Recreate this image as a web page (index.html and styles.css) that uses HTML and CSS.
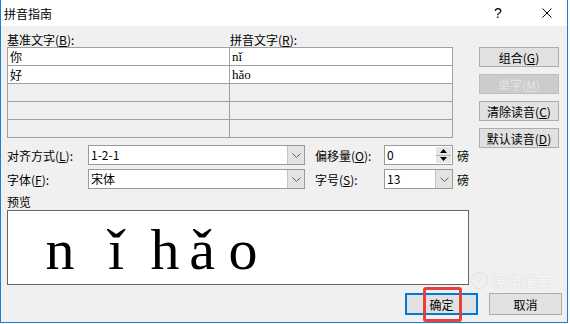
FILE: index.html
```html
<!DOCTYPE html>
<html lang="zh-CN">
<head>
  <meta charset="UTF-8" />
  <title>拼音指南</title>
  <link rel="stylesheet" href="styles.css">
</head>
<body>
  <div class="window">
    <div class="titlebar">
      <span class="title">拼音指南</span>
      <span class="help">?</span>
      <span class="close">
        <svg width="10" height="10" viewBox="0 0 10 10"><path d="M0.5 0.5L9.5 9.5M9.5 0.5L0.5 9.5" stroke="#000" stroke-width="1"/></svg>
      </span>
    </div>

    <div class="content">
      <div class="table-area">
        <div class="col-labels">
          <span class="col-label">基准文字(<u>B</u>):</span>
          <span class="col-label">拼音文字(<u>R</u>):</span>
        </div>
        <div class="ruby-grid">
          <div class="cell filled">你</div><div class="cell filled pinyin">nǐ</div>
          <div class="cell filled">好</div><div class="cell filled pinyin">hǎo</div>
          <div class="cell"></div><div class="cell"></div>
          <div class="cell"></div><div class="cell"></div>
          <div class="cell"></div><div class="cell"></div>
        </div>
      </div>

      <div class="side-buttons">
        <button class="btn">组合(<u>G</u>)</button>
        <button class="btn disabled">单字(<u>M</u>)</button>
        <button class="btn">清除读音(<u>C</u>)</button>
        <button class="btn">默认读音(<u>D</u>)</button>
      </div>

      <div class="form">
        <span class="form-label">对齐方式(<u>L</u>):</span>
        <div class="combo">
          <span class="combo-value">1-2-1</span>
          <span class="combo-arrow"><svg width="9" height="5" viewBox="0 0 9 5"><path d="M0.5 0.5L4.5 4.5L8.5 0.5" fill="none" stroke="#606060"/></svg></span>
        </div>
        <span class="form-label second">偏移量(<u>O</u>):</span>
        <div class="combo">
          <span class="combo-value">0</span>
          <span class="spin-buttons">
            <span class="spin-half"><svg width="7" height="4" viewBox="0 0 7 4"><path d="M0 4L3.5 0L7 4Z" fill="#000"/></svg></span>
            <span class="spin-half"><svg width="7" height="4" viewBox="0 0 7 4"><path d="M0 0L3.5 4L7 0Z" fill="#000"/></svg></span>
          </span>
        </div>
        <span class="unit">磅</span>

        <span class="form-label">字体(<u>F</u>):</span>
        <div class="combo">
          <span class="combo-value">宋体</span>
          <span class="combo-arrow"><svg width="9" height="5" viewBox="0 0 9 5"><path d="M0.5 0.5L4.5 4.5L8.5 0.5" fill="none" stroke="#606060"/></svg></span>
        </div>
        <span class="form-label second">字号(<u>S</u>):</span>
        <div class="combo">
          <span class="combo-value">13</span>
          <span class="combo-arrow"><svg width="9" height="5" viewBox="0 0 9 5"><path d="M0.5 0.5L4.5 4.5L8.5 0.5" fill="none" stroke="#606060"/></svg></span>
        </div>
        <span class="unit">磅</span>
      </div>

      <div class="preview-label">预览</div>
      <div class="preview">
        <span class="letter l1">n</span>
        <span class="letter l2">ǐ</span>
        <span class="letter l3">h</span>
        <span class="letter l4">ǎ</span>
        <span class="letter l5">o</span>
      </div>

      <div class="actions">
        <button class="btn action default">确定<span class="highlight"></span></button>
        <button class="btn action">取消</button>
      </div>
    </div>

    <div class="watermark"><span class="wm-logo">S</span>搜狗指南</div>
  </div>
</body>
</html>
```

FILE: styles.css
```css
body {
  margin: 0;
  background: #fff;
  font-family: "Noto Sans CJK SC", "Microsoft YaHei", sans-serif;
  font-size: 12px;
  color: #000;
}
u {
  text-decoration: underline;
}
.window {
  width: 568px;
  height: 323px;
  box-sizing: border-box;
  border: 1px solid #1c7fd6;
  border-top: none;
  position: relative;
  display: flex;
  flex-direction: column;
}
.titlebar {
  height: 26px;
  flex: none;
  background: #fff;
  display: flex;
  align-items: center;
}
.title {
  flex: 1;
  padding-left: 3px;
}
.help {
  width: 46px;
  text-align: center;
  font-family: "Liberation Sans", sans-serif;
  font-size: 14px;
}
.close {
  width: 46px;
  box-sizing: border-box;
  padding-left: 5px;
  display: flex;
  justify-content: center;
}
.content {
  flex: 1;
  background: #f0f0f0;
  padding: 6px 5px 0 6px;
  display: grid;
  grid-template-columns: 472px 1fr;
  align-content: start;
}
.table-area {
  grid-column: 1;
  grid-row: 1;
}
.col-labels {
  display: flex;
  height: 15px;
  line-height: 15px;
}
.col-label:first-child {
  width: 223px;
}
.ruby-grid {
  width: 446px;
  box-sizing: border-box;
  display: grid;
  grid-template-columns: 221px 222px;
  grid-auto-rows: 17px;
  gap: 1px;
  background: #a0a0a0;
  border: 1px solid #a0a0a0;
}
.cell {
  background: #efefef;
  padding-left: 2px;
  line-height: 17px;
}
.cell.filled {
  background: #fff;
}
.cell.pinyin {
  font-family: "Liberation Serif", serif;
  font-size: 13px;
}
.side-buttons {
  grid-column: 2;
  grid-row: 1 / span 2;
  margin-top: 15px;
  width: 80px;
  display: flex;
  flex-direction: column;
  gap: 7px;
}
.btn {
  height: 20px;
  padding: 0;
  border: 1px solid #adadad;
  background: #e1e1e1;
  font-family: inherit;
  font-size: 12px;
  color: #000;
}
.btn.disabled {
  background: #cccccc;
  border-color: #bfbfbf;
  color: #e4e4e4;
}
.form {
  grid-column: 1;
  grid-row: 2;
  margin-top: 7px;
  display: grid;
  grid-template-columns: 81px 217px 79px 69px auto;
  grid-auto-rows: 20px;
  row-gap: 4px;
  align-items: center;
}
.form-label.second {
  padding-left: 10px;
}
.combo {
  height: 20px;
  box-sizing: border-box;
  display: flex;
  border: 1px solid #9a9a9a;
  background: #fff;
}
.combo-value {
  flex: 1;
  padding-left: 2px;
  line-height: 18px;
}
.combo-arrow {
  width: 16px;
  background: #e3e3e3;
  border-left: 1px solid #c4c4c4;
  display: flex;
  align-items: center;
  justify-content: center;
}
.spin-buttons {
  width: 15px;
  margin: 1px 1px 1px 0;
  display: flex;
  flex-direction: column;
  background: #e6e6e6;
}
.spin-half {
  flex: 1;
  display: flex;
  align-items: center;
  justify-content: center;
}
.spin-half:first-child {
  border-bottom: 1px solid #b0b0b0;
}
.unit {
  padding-left: 4px;
}
.preview-label {
  grid-column: 1 / -1;
  margin-top: 5px;
  line-height: 15px;
}
.preview {
  grid-column: 1 / -1;
  margin-top: 1px;
  width: 462px;
  height: 75px;
  box-sizing: border-box;
  border: 1px solid #646464;
  background: #fff;
  padding-top: 10px;
  display: flex;
  font-family: "Liberation Serif", "DejaVu Serif", serif;
  font-size: 58px;
  line-height: 58px;
}
.letter {
  width: 36px;
  text-align: center;
}
.l1 { margin-left: 34px; }
.l2 { margin-left: 20px; }
.l3 { margin-left: 13px; }
.l4 { margin-left: 1px; }
.l5 { margin-left: 5px; }
.actions {
  grid-column: 1 / -1;
  margin-top: 8px;
  display: flex;
  justify-content: flex-end;
  gap: 11px;
}
.btn.action {
  width: 73px;
  height: 22px;
  position: relative;
}
.btn.default {
  border: 2px solid #0078d7;
}
.highlight {
  position: absolute;
  left: 16px;
  top: -8px;
  width: 39px;
  height: 35px;
  box-sizing: border-box;
  border: 3px solid #e5403e;
  border-radius: 3px;
}
.watermark {
  position: absolute;
  left: 470px;
  top: 270px;
  display: flex;
  align-items: center;
  gap: 3px;
  font-size: 15px;
  color: #f7f7f7;
  text-shadow: 0 0 1px #c9c9c9;
}
.wm-logo {
  width: 15px;
  height: 15px;
  border-radius: 50%;
  border: 1px solid #e0e0e0;
  font-family: "Liberation Sans", sans-serif;
  font-size: 11px;
  line-height: 15px;
  text-align: center;
}
```
